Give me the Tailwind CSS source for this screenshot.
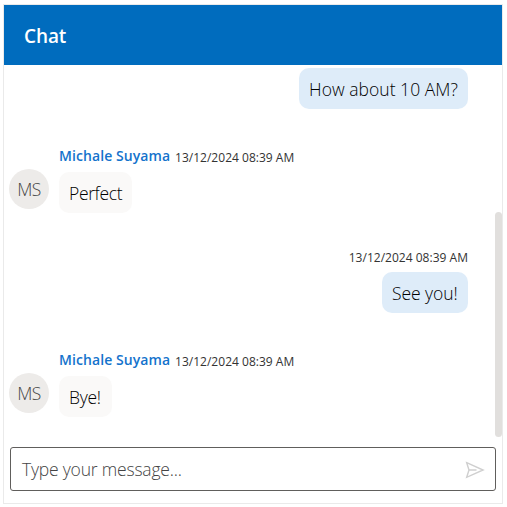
<!DOCTYPE html>
<html lang="en">
<head>
<meta charset="utf-8">
<title>Chat</title>
<script src="https://cdn.jsdelivr.net/npm/@tailwindcss/browser@4"></script>
</head>
<body class="h-[507px] overflow-hidden bg-white pt-1 pl-[3px] font-['Open_Sans','Noto_Sans',sans-serif] whitespace-nowrap">
<div class="flex h-[500px] w-[500px] flex-col border border-[#eaeaea] bg-white">
  <header class="flex h-[60px] shrink-0 items-center bg-[#006cbe] pt-0.5 pl-5">
    <h1 class="text-[19px] leading-6 font-semibold text-white tracking-[-0.1px]">Chat</h1>
  </header>
  <main class="relative flex h-[372px] flex-col overflow-hidden pl-[5px] pr-[34px] pt-[3px]">
    <div class="flex h-[41px] w-[169px] shrink-0 items-center self-end rounded-[10px] bg-[#deecf9] pt-px pl-[10px] text-[17.5px] font-[350] tracking-[0.04px] text-black">How about 10 AM?</div>

    <div class="mt-[36px] flex shrink-0">
      <div class="mt-6 flex size-10 shrink-0 items-center justify-center rounded-full bg-[#edebe9] text-[17.5px] font-[350] tracking-[-0.5px] text-[#444]">MS</div>
      <div class="ml-2.5">
        <div class="flex h-[27px] pt-px"><span class="w-[116px] text-[14px] leading-5 font-semibold text-[#1473cc] tracking-[0.08px]">Michale Suyama</span><span class="pt-[2px] text-[12px] leading-5 text-[#333] tracking-[0.02px]">13/12/2024 08:39 AM</span></div>
        <div class="flex h-[41px] w-[73px] items-center rounded-[10px] bg-[#faf9f8] pt-px pl-[10px] text-[17.5px] font-[350] tracking-[-0.35px] text-black">Perfect</div>
      </div>
    </div>

    <div class="mt-[34px] flex shrink-0 flex-col items-end">
      <div class="h-[25px] pt-px text-[12px] leading-5 text-[#333] tracking-[0.02px]">13/12/2024 08:39 AM</div>
      <div class="flex h-[41px] w-[86px] items-center rounded-[10px] bg-[#deecf9] pt-px pl-[10px] text-[17.5px] font-[350] tracking-[-0.05px] text-black">See you!</div>
    </div>

    <div class="mt-[36px] flex shrink-0">
      <div class="mt-6 flex size-10 shrink-0 items-center justify-center rounded-full bg-[#edebe9] text-[17.5px] font-[350] tracking-[-0.5px] text-[#444]">MS</div>
      <div class="ml-2.5">
        <div class="flex h-[27px] pt-px"><span class="w-[116px] text-[14px] leading-5 font-semibold text-[#1473cc] tracking-[0.08px]">Michale Suyama</span><span class="pt-[2px] text-[12px] leading-5 text-[#333] tracking-[0.02px]">13/12/2024 08:39 AM</span></div>
        <div class="flex h-[41px] w-[53px] items-center rounded-[10px] bg-[#faf9f8] pt-px pl-[10px] text-[17.5px] font-[350] tracking-[-0.25px] text-black">Bye!</div>
      </div>
    </div>
    <div class="absolute top-[147px] right-0 h-[225px] w-[7px] rounded-full bg-[#e1dfdd]"></div>
  </main>
  <footer class="px-1.5 pt-[10px]">
    <div class="flex h-[44px] w-[486px] items-center justify-between rounded-[3px] border border-[#605e5c] pt-px pl-[11px] pr-[10px]">
      <span class="text-[17.5px] font-[350] text-[#444] tracking-[-0.2px]">Type your message...</span>
      <svg class="size-5" viewBox="0 0 20 20" fill="none" stroke="#cfcfcf" stroke-width="1.4" stroke-linejoin="miter"><path d="M1.7 2.7 18.1 10 1.7 17.3 4 10ZM4 10H11.5"/></svg>
    </div>
  </footer>
</div>
</body>
</html>
